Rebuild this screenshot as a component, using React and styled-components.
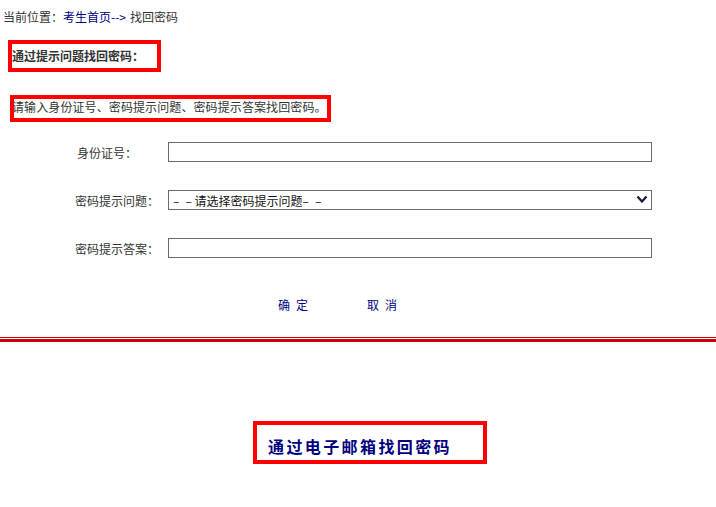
import React from "react";
import styled, { createGlobalStyle } from "styled-components";

const Global = createGlobalStyle`
  html, body { margin: 0; padding: 0; background: #fff; }
  body {
    font-family: "Noto Sans CJK SC", "Liberation Sans", sans-serif;
    font-size: 12px;
    color: #333;
  }
  * { box-sizing: border-box; }
`;

const Page = styled.div`
  width: 716px;
  display: flex;
  flex-direction: column;
`;

const Breadcrumb = styled.div`
  height: 34px;
  line-height: 34px;
  padding-left: 3px;
  color: #333;
  white-space: nowrap;
`;

const CrumbLink = styled.a`
  color: #000080;
  text-decoration: none;
`;

const Arrow = styled.span`
  color: #000080;
  margin-right: 4px;
`;

const RedBox = styled.div`
  border: 4px solid #ff0000;
  margin-left: ${(p) => p.$left}px;
  margin-top: ${(p) => p.$top}px;
  width: ${(p) => p.$w}px;
  height: ${(p) => p.$h}px;
  display: flex;
  align-items: ${(p) => p.$align || "center"};
  padding-left: ${(p) => p.$pad || 0}px;
`;

const BoldTitle = styled.span`
  font-weight: bold;
  color: #333;
  line-height: 14px;
`;

const Hint = styled.span`
  line-height: 14px;
  margin-left: -2px;
  margin-top: 1px;
  white-space: nowrap;
  letter-spacing: 0.1px;
`;

const Form = styled.div`
  margin-top: 6px;
  display: flex;
  flex-direction: column;
`;

const Row = styled.div`
  height: 48px;
  display: grid;
  grid-template-columns: 168px 484px;
  align-items: center;
`;

const Label = styled.label`
  padding-left: ${(p) => p.$pad}px;
  color: #333;
  white-space: nowrap;
`;

const TextInput = styled.input`
  width: 484px;
  height: 20px;
  border: 1px solid #6b6b6b;
  padding: 0 4px;
  font: inherit;
  outline: none;
`;

const SelectWrap = styled.div`
  position: relative;
  width: 484px;
  height: 20px;
`;

const Select = styled.select`
  appearance: none;
  -webkit-appearance: none;
  width: 100%;
  height: 20px;
  border: 1px solid #6b6b6b;
  background: #fff;
  padding: 0 0 0 4px;
  font: inherit;
  font-size: 12px;
  color: #111;
  outline: none;
`;

const Chevron = styled.svg`
  position: absolute;
  right: 4px;
  top: 5px;
  width: 12px;
  height: 9px;
  pointer-events: none;
`;

const Actions = styled.div`
  height: 65px;
  display: flex;
  align-items: center;
  padding-left: 278px;
  gap: 53px;
`;

const TextButton = styled.button`
  background: none;
  border: none;
  padding: 0;
  font: inherit;
  font-size: 12px;
  color: #000080;
  letter-spacing: 6px;
  cursor: pointer;
  line-height: 14px;
`;

const Divider = styled.div`
  height: 5px;
  border-top: 1px solid #cc0000;
  border-bottom: 3px solid #cc0000;
`;

const MailTitle = styled.span`
  font-weight: bold;
  font-size: 16px;
  letter-spacing: 2.4px;
  color: #000080;
  line-height: 18px;
  margin-top: 6px;
  white-space: nowrap;
`;

export default function App() {
  return (
    <Page>
      <Global />
      <Breadcrumb>
        当前位置：<CrumbLink href="#">考生首页</CrumbLink>
        <Arrow>--&gt;</Arrow>找回密码
      </Breadcrumb>

      <RedBox $left={8} $top={6} $w={153} $h={32}>
        <BoldTitle>通过提示问题找回密码：</BoldTitle>
      </RedBox>

      <RedBox $left={10} $top={23} $w={321} $h={27} $align="flex-start">
        <Hint>请输入身份证号、密码提示问题、密码提示答案找回密码。</Hint>
      </RedBox>

      <Form>
        <Row>
          <Label $pad={77}>身份证号：</Label>
          <TextInput type="text" />
        </Row>
        <Row>
          <Label $pad={75}>密码提示问题：</Label>
          <SelectWrap>
            <Select defaultValue="">
              <option value="">{"\u2002\u2013\u2002\u2013 请选择密码提示问题\u2013\u2002\u2013"}</option>
            </Select>
            <Chevron viewBox="0 0 12 9">
              <path d="M1.5 1.5 L6 6.5 L10.5 1.5" fill="none" stroke="#1a1a3a" strokeWidth="2.2" />
            </Chevron>
          </SelectWrap>
        </Row>
        <Row>
          <Label $pad={75}>密码提示答案：</Label>
          <TextInput type="text" />
        </Row>
      </Form>

      <Actions>
        <TextButton>确定</TextButton>
        <TextButton>取消</TextButton>
      </Actions>

      <Divider />

      <RedBox $left={253} $top={79} $w={234} $h={43} $pad={11}>
        <MailTitle>通过电子邮箱找回密码</MailTitle>
      </RedBox>
    </Page>
  );
}
